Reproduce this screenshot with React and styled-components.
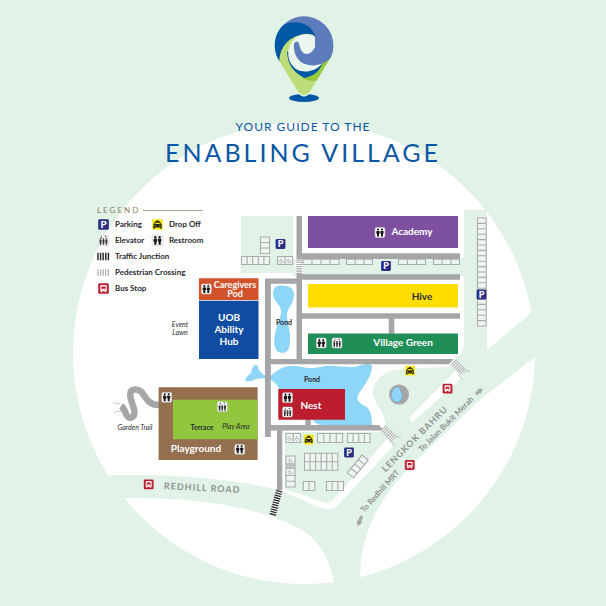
import React from "react";
import styled, { createGlobalStyle } from "styled-components";

const color = {
  mint: "#e1f2e7",
  road: "#a6a6a8",
  line: "#a9adac",
  water: "#8dd6f7",
  blue: "#0a57a4",
  navy: "#2b2e83",
  red: "#bd1e2f",
  ink: "#2a2a2c",
  street: "#8f9492",
  brown: "#94704f",
};

const GlobalStyle = createGlobalStyle`
  *, *::before, *::after { box-sizing: border-box; }
  body { margin: 0; background: ${color.mint}; font-family: Lato, "Open Sans", sans-serif; }
`;

const Poster = styled.main`
  display: grid;
  width: 100%;
`;

const MapDrawing = styled.svg`
  grid-area: 1 / 1;
  display: block;
  width: 100%;
  height: auto;
`;

const Foreground = styled.div`
  grid-area: 1 / 1;
  display: flex;
  flex-direction: column;
  z-index: 1;
`;

const Header = styled.header`
  display: flex;
  flex-direction: column;
  align-items: center;
  padding-top: 8px;
  color: ${color.blue};
`;

const Logo = styled.svg`
  display: block;
  width: 76px;
  height: 100px;
`;

const Title = styled.h1`
  display: flex;
  flex-direction: column;
  align-items: center;
  margin: 10px 0 0;
  font-size: 25px;
  font-weight: 400;
  line-height: 32px;
  letter-spacing: 3px;
`;

const Kicker = styled.span`
  font-size: 12px;
  line-height: 18px;
  letter-spacing: 1px;
`;

const Legend = styled.section`
  width: 106px;
  margin: 36px 0 0 16%;
`;

const LegendTitle = styled.h2`
  display: flex;
  align-items: center;
  gap: 3px;
  margin: 0;
  color: #8f7a61;
  font-size: 8px;
  font-weight: 400;
  line-height: 12px;
  letter-spacing: 2px;

  &::after {
    content: "";
    flex: 1;
    height: 1px;
    background: #b3a28f;
  }
`;

const LegendList = styled.ul`
  display: grid;
  grid-template-columns: 54px 1fr;
  margin: 0;
  padding: 0;
  list-style: none;
`;

const LegendItem = styled.li`
  grid-column: ${(p) => (p.$wide ? "1 / -1" : "auto")};
  display: flex;
  align-items: center;
  gap: 5px;
  height: 16px;
  color: ${color.ink};
  font-size: 8px;
  font-weight: 700;
  white-space: nowrap;
`;

const LegendIcon = styled.svg`
  flex: none;
  width: 13px;
  height: 13px;
`;

const MapText = styled.text`
  font-family: Lato, "Open Sans", sans-serif;
  font-size: ${(p) => p.$size || 10}px;
  font-weight: ${(p) => p.$weight || 700};
  font-style: ${(p) => (p.$italic ? "italic" : "normal")};
  letter-spacing: ${(p) => p.$track || 0}px;
  fill: ${(p) => p.$fill || "#fff"};
  text-anchor: middle;
`;

/* Signs are drawn on a 12-unit square centred on the origin. */
function Person({ x, scale = 1 }) {
  return (
    <g transform={`translate(${x} 0) scale(${scale})`} fill="#18181a">
      <circle cy="-3" r="1.1" />
      <path d="M-1.6-1.6h3.2V1H1V4H-1V1h-.6z" />
    </g>
  );
}

function Sign({ kind, x = 0, y = 0 }) {
  const tile = (fill, stroke = "none") => (
    <rect x="-4.9" y="-4.9" width="9.8" height="9.8" rx="1.3" fill={fill} stroke={stroke} strokeWidth=".6" />
  );
  return (
    <g transform={`translate(${x} ${y})`}>
      {kind === "parking" && (
        <>
          {tile(color.navy)}
          <MapText $size={9} $weight={900} y="3.2">P</MapText>
        </>
      )}
      {kind === "restroom" && (
        <>
          {tile("#fff", "#c9c9cb")}
          <Person x={-2} />
          <Person x={2} />
          <path d="M-3.9 1-2-1.9-.1 1z" fill="#18181a" />
        </>
      )}
      {kind === "elevator" && (
        <>
          {tile("#fff", "#c9c9cb")}
          <path d="M-3-2.6l1-1.5 1 1.5zM1-4.1h2l-1 1.500z" fill="#444" />
          {[-2.7, 0, 2.7].map((px) => (
            <path key={px} d="M-.7-2h1.400v1h-1.400zM-.95-.7h1.900V1.800H.7V4H-.7V1.800h-.25z" transform={`translate(${px} 0)`} fill="#333" />
          ))}
        </>
      )}
      {kind === "taxi" && (
        <>
          <rect x="-4.9" y="-4.9" width="9.8" height="9.8" rx=".6" fill="#f6e71c" />
          <path d="M-1.2-3.7h2.4v1h1l1 2 .7.8V3.6H2.3V2.7h-4.6v.9H-3.9V.1l.7-.8 1-2h1z" fill="#2b2913" />
          <path d="M-1.8-1.7h3.6l.5 1.3h-4.6zM-3 .9h1.3v.8H-3zM1.7.9H3v.8H1.7z" fill="#f6e71c" />
        </>
      )}
      {kind === "bus" && (
        <>
          {tile(color.red)}
          <path d="M-2-3.3h4a1 1 0 0 1 1 1V2.5h-.6v1H1.2v-1h-2.4v1h-1.2v-1H-3v-4.8a1 1 0 0 1 1-1z" fill="#fff" />
          <path d="M-2-1.9h4v2.1h-4zM-2 1h1v.7h-1zM1 1h1v.7H1z" fill={color.red} />
        </>
      )}
      {kind === "junction" && <path d="M-5.8 0H6" stroke="#333" strokeWidth="7" strokeDasharray="1.4 1" />}
      {kind === "crossing" && <path d="M-5.8 0H6" stroke="#b4b6b6" strokeWidth="6" strokeDasharray="1.3 1.1" />}
    </g>
  );
}

const legend = [
  { kind: "parking", label: "Parking" },
  { kind: "taxi", label: "Drop Off" },
  { kind: "elevator", label: "Elevator" },
  { kind: "restroom", label: "Restroom" },
  { kind: "junction", label: "Traffic Junction", wide: true },
  { kind: "crossing", label: "Pedestrian Crossing", wide: true },
  { kind: "bus", label: "Bus Stop", wide: true },
];

const signs = [
  ["parking", 280.5, 244], ["parking", 386, 266], ["parking", 481.5, 294.5], ["parking", 349, 452.5],
  ["restroom", 380, 232.5], ["restroom", 206.3, 289], ["restroom", 321.3, 343], ["elevator", 337, 343],
  ["restroom", 287.5, 397.7], ["elevator", 287.5, 412], ["restroom", 166.7, 397.3], ["elevator", 222.3, 406.7],
  ["restroom", 239.7, 449.3], ["taxi", 410, 370.7], ["taxi", 308.7, 439.5], ["bus", 148.7, 484.3],
  ["bus", 447.5, 388.6], ["bus", 409.7, 465],
];

/* x, y, width, height, columns, rows */
const stalls = [
  [241.5, 256.5, 28, 8, 5, 1], [260.5, 237, 9, 16.5, 1, 3], [277.5, 256.5, 15, 8, 2, 1],
  [303, 259.3, 36, 5.2, 4, 1], [346.5, 259.3, 26, 5.2, 3, 1], [398.5, 259.3, 27, 5.2, 3, 1],
  [433.5, 259.3, 26, 5.2, 3, 1], [477.5, 218, 8.7, 108, 1, 20], [286, 433.5, 14.5, 9, 2, 1],
  [317.5, 433.5, 25, 9, 4, 1], [347.5, 433.5, 22.5, 9, 4, 1], [304.5, 453.3, 33.3, 17, 6, 2],
  [303.3, 481.5, 11.5, 9, 2, 1], [326.5, 481.5, 17, 9, 3, 1],
  [286, 456, 9, 8, 1, 1], [286, 468, 9, 7.5, 1, 1], [286, 475.5, 9, 11.5, 1, 2],
];

const wheelchairs = [[281.5, 260.8], [289, 260.8], [290, 438.2], [297.3, 438.2], [290.5, 460.2], [290.5, 471.8]];

function Stalls({ x, y, w, h, cols, rows }) {
  let d = `M${x} ${y}h${w}v${h}h${-w}z`;
  for (let i = 1; i < cols; i++) d += `M${x + (w * i) / cols} ${y}v${h}`;
  for (let i = 1; i < rows; i++) d += `M${x} ${y + (h * i) / rows}h${w}`;
  return <path d={d} fill="#edf7f0" stroke={color.line} strokeWidth="1.1" />;
}

function Ground() {
  return (
    <g>
      <circle cx="304" cy="353" r="231" fill="#fff" />
      <g fill={color.mint}>
        <path d="M241 216h52v57h-52zM293 259h167q4 0 4-5v22H293z" />
        <path d="M464 210H487V350L550 297V345L535 357 480 400 420 457C392 483 360 522 360 577V600H336C334 563 321 541 300 529C255 505 190 497 125 498H80V475H145C200 476 250 482 281 491L321 508Q331 512 338 505L393 446 385 436V425C386 414 378 408 375 400C367 386 382 371 397 370C418 366 440 369 450 366L455 358Q464 353 464 343Z" />
        <path d="M285 432H383L388 438 333 500Q329 505 323 502L285 489z" />
      </g>
      <path d="M410 417 455 371 464 376 413 422q-3 1-3-5z" fill="#fff" />
    </g>
  );
}

function Water() {
  return (
    <g fill={color.water}>
      <path d="M273 294C273 285 280 285 286 286C293 287 296 293 293 300C291 307 286 310 287 317C288 327 291 332 290 340C290 348 288 353 282 353C274 352 273 343 275 335C276 326 280 321 281 313C282 304 273 302 273 294Z" />
      <path d="M245 381C247 374 251 376 252 369C254 363 258 364 259 370C262 375 268 378 273 374C281 367 286 366 292 366C303 366 309 370 320 367C332 364 344 368 354 367C361 366 369 361 372 366C372 374 368 379 363 388C357 395 354 400 363 405C370 408 372 414 372 425H322Q315 425 312 418L279 400V389C275 378 263 377 256 379Q250 382 245 381Z" />
    </g>
  );
}

function Roads() {
  return (
    <g fill={color.road}>
      <path d="M296.5 216h5.5v37.3h158v5.6H296.5zM296.5 273h5.5v1.2h158v5.6H302v33.5h158v5.5h-65.7V334h-5.6V318.8H302V359h151.5l-4.5 5.3H270.8V425H379l5 5.4H282.3V490H277V430.4H270.8V437H265V278.4h31.5zM296.5 283.8H270.8V359h25.7z" fillRule="evenodd" />
      <path d="M305.5 419h5.3v7h-5.3z" />
      <circle cx="399" cy="394.6" r="10" />
      <path d="M394 401C390 397 391 391 395 388C399 385 400 390 401 392C404 396 401 402 397 402Q395 402 394 401Z" fill={color.water} stroke="#6eaed0" strokeWidth=".6" />
      <path d="M159 405C143 405 146 389 135 389.5C126 390 132 402 134 409C136 418 129 421 126 414Q124 408 121 406" fill="none" stroke={color.road} strokeWidth="6.5" />
      <g fill="none" stroke={color.line} strokeWidth=".7">
        <path d="M113 402q3 2 7 2M114 412.5q4-2 7-1M396 436q2 2 5 1M390 441q4 1 4 5M464 370q2 2 6 1M458 375q4 1 4 5" />
      </g>
      <g fill="none">
        <path d="M299.2 259.5V273M453.5 362 464 373M383 428 394 439" stroke="#fff" strokeWidth="7" />
        <path d="M299.2 259.5V273" stroke={color.line} strokeWidth="6" strokeDasharray="1.2 1" />
        <path d="M453.5 362 464 373M383 428 394 439" stroke={color.line} strokeWidth="8" strokeDasharray="1.1 1" />
        <path d="M279.2 490.5 272.5 515.5" stroke="#fff" strokeWidth="6.5" />
        <path d="M279.2 490.5 272.5 515.5" stroke="#333" strokeWidth="6.5" strokeDasharray="1.4 1" />
      </g>
      <path d="M0-1.6H4V-3L8.500 0 4 3V1.600H0z" transform="translate(476 394) rotate(-40)" />
      <path d="M0-1.600H6V-3L11 0 6 3V1.600H0z" transform="translate(361.800 516) rotate(112)" />
    </g>
  );
}

function Parking() {
  return (
    <g>
      {stalls.map(([x, y, w, h, cols, rows]) => (
        <Stalls key={`${x}-${y}`} x={x} y={y} w={w} h={h} cols={cols} rows={rows} />
      ))}
      <g transform="translate(347.3 472.7) rotate(-50)">
        <Stalls x={0} y={0} w={23} h={8} cols={4} rows={1} />
      </g>
      <path d="M286 464h9v4h-9zM286 465.5h9M286 467h9" fill="none" stroke={color.line} strokeWidth=".8" />
      {wheelchairs.map(([x, y]) => (
        <path key={`${x}-${y}`} d="M-.8-2.3V.2H1l.9 1.8M-1.3-.7A1.6 1.6 0 1 0 1 1.3" transform={`translate(${x} ${y})`} fill="none" stroke={color.line} strokeWidth=".7" />
      ))}
    </g>
  );
}

function Buildings() {
  return (
    <g>
      <path d="M308 216h150v32H308z" fill="#7d51a0" />
      <path d="M308 284h150v23.5H308z" fill="#ffde00" />
      <path d="M308 333.5h150V354H308z" fill="#1f8f57" />
      <path d="M199 278.3h59.5V300H199z" fill="#d2532b" />
      <path d="M199 300.7h59.5V359H199z" fill="#104da2" />
      <path d="M158.6 387.3h99V460h-99z" fill={color.brown} />
      <path d="M173 399.7h84.600v39.600H173z" fill="#90c73e" />
      <path d="M278.3 389H345v30.7h-66.7z" fill={color.red} />

      <MapText x="412" y="235">Academy</MapText>
      <MapText x="422" y="300" $fill={color.ink}>Hive</MapText>
      <MapText x="403" y="346">Village Green</MapText>
      <MapText x="235" y="288" $size={9}>Caregivers</MapText>
      <MapText x="235" y="297" $size={9}>Pod</MapText>
      <MapText x="229" y="321">UOB</MapText>
      <MapText x="229" y="333">Ability</MapText>
      <MapText x="229" y="345">Hub</MapText>
      <MapText x="311" y="409">Nest</MapText>
      <MapText x="196" y="452">Playground</MapText>
      <MapText x="284" y="325" $size={7} $fill={color.ink}>Pond</MapText>
      <MapText x="312" y="382" $size={7} $fill={color.ink}>Pond</MapText>
      <MapText x="202" y="430" $size={7} $fill={color.ink}>Terrace</MapText>
      <MapText x="236" y="429" $size={7} $weight={400} $italic $fill={color.ink}>Play Area</MapText>
      <MapText x="135" y="430" $size={7} $weight={400} $italic $fill={color.ink}>Garden Trail</MapText>
      <MapText x="180" y="327" $size={7} $weight={400} $italic $fill={color.ink}>Event</MapText>
      <MapText x="180" y="335" $size={7} $weight={400} $italic $fill={color.ink}>Lawn</MapText>
    </g>
  );
}

function StreetNames() {
  return (
    <g>
      <MapText transform="translate(202 491) rotate(3)" $size={9} $track={1} $fill={color.street}>REDHILL ROAD</MapText>
      <MapText transform="translate(417 441) rotate(-45)" $size={9} $track={1} $fill={color.street}>LENGKOK BAHRU</MapText>
      <MapText transform="translate(448 426) rotate(-45)" $size={8} $fill={color.street}>To Jalan Bukit Merah</MapText>
      <MapText transform="translate(382 493) rotate(-48)" $size={8} $fill={color.street}>To Redhill MRT</MapText>
    </g>
  );
}

function VillageLogo() {
  return (
    <Logo viewBox="0 0 228 300" role="img" aria-label="Enabling Village logo">
      <ellipse cx="117" cy="270" rx="45" ry="12" fill="#0057a3" />
      <path d="M42 158 100 252Q117 274 134 252L196 150z" fill="#bddd79" stroke={color.mint} strokeWidth="6" />
      <circle cx="117" cy="112" r="87" fill="#5d7cbb" />
      <path d="M43 160C22 125 24 80 56 51C92 32 140 46 150 84L100 140z" fill="#0057a3" />
      <path d="M43 159C45 110 82 72 145 80L150 130 196 150 134 252Q117 270 100 252z" fill="#bddd79" />
      <path d="M196 148 155 218C138 221 126 217 112 210L150 165z" fill="#98ca3f" />
      <path d="M66 130C68 172 86 192 117 210C145 205 164 190 173 165L100 145z" fill="#0057a3" />
      <path d="M150 86C125 70 95 78 78 105C62 135 70 165 92 183C115 197 152 192 173 165L150 140z" fill="#eaf6ee" />
      <path d="M150 82C158 106 149 128 134 136C119 142 107 132 103 110C100 98 90 98 87 109C85 137 98 160 120 168C146 178 178 169 197 150A87 87 0 0 0 150 32z" fill="#5d7cbb" />
    </Logo>
  );
}

export default function App() {
  return (
    <>
      <GlobalStyle />
      <Poster>
        <MapDrawing viewBox="0 0 606 606" role="group" aria-label="Map of Enabling Village">
          <Ground />
          <Water />
          <Roads />
          <Parking />
          <Buildings />
          <StreetNames />
          {signs.map(([kind, x, y]) => (
            <Sign key={`${kind}-${x}-${y}`} kind={kind} x={x} y={y} />
          ))}
        </MapDrawing>
        <Foreground>
          <Header>
            <VillageLogo />
            <Title>
              <Kicker>YOUR GUIDE TO THE</Kicker>
              ENABLING VILLAGE
            </Title>
          </Header>
          <Legend>
            <LegendTitle>LEGEND</LegendTitle>
            <LegendList>
              {legend.map((item) => (
                <LegendItem key={item.kind} $wide={item.wide}>
                  <LegendIcon viewBox="-6 -6 12 12" aria-hidden="true">
                    <Sign kind={item.kind} />
                  </LegendIcon>
                  {item.label}
                </LegendItem>
              ))}
            </LegendList>
          </Legend>
        </Foreground>
      </Poster>
    </>
  );
}
